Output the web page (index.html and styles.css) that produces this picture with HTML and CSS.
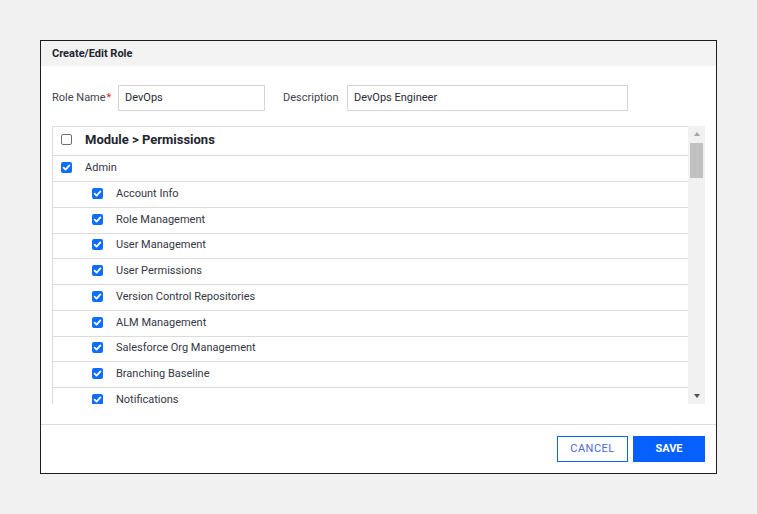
FILE: index.html
```html
<!DOCTYPE html>
<html>
<head>
<meta charset="utf-8">
<link rel="stylesheet" href="styles.css">
</head>
<body>
<div class="modal">
  <div class="modal-header">Create/Edit Role</div>
  <div class="modal-body">
    <div class="form-row">
      <label class="field-label name-label">Role Name<span class="req">*</span></label>
      <div class="input input-name">DevOps</div>
      <label class="field-label desc-label">Description</label>
      <div class="input input-desc">DevOps Engineer</div>
    </div>
    <div class="table-wrap">
      <div class="table">
        <div class="row head-row">
          <span class="cb cb-empty"></span>
          <span class="head-text">Module &gt; Permissions</span>
        </div>
        <div class="row module-row">
          <span class="cb"><svg viewBox="0 0 11 11"><path d="M2.6 5.6 L4.6 7.6 L8.4 3.4" fill="none" stroke="#fff" stroke-width="1.8" stroke-linecap="round" stroke-linejoin="round"/></svg></span>
          <span class="row-text">Admin</span>
        </div>
        <div class="row perm-row"><span class="cb"><svg viewBox="0 0 11 11"><path d="M2.6 5.6 L4.6 7.6 L8.4 3.4" fill="none" stroke="#fff" stroke-width="1.8" stroke-linecap="round" stroke-linejoin="round"/></svg></span><span class="row-text">Account Info</span></div>
        <div class="row perm-row"><span class="cb"><svg viewBox="0 0 11 11"><path d="M2.6 5.6 L4.6 7.6 L8.4 3.4" fill="none" stroke="#fff" stroke-width="1.8" stroke-linecap="round" stroke-linejoin="round"/></svg></span><span class="row-text">Role Management</span></div>
        <div class="row perm-row"><span class="cb"><svg viewBox="0 0 11 11"><path d="M2.6 5.6 L4.6 7.6 L8.4 3.4" fill="none" stroke="#fff" stroke-width="1.8" stroke-linecap="round" stroke-linejoin="round"/></svg></span><span class="row-text">User Management</span></div>
        <div class="row perm-row"><span class="cb"><svg viewBox="0 0 11 11"><path d="M2.6 5.6 L4.6 7.6 L8.4 3.4" fill="none" stroke="#fff" stroke-width="1.8" stroke-linecap="round" stroke-linejoin="round"/></svg></span><span class="row-text">User Permissions</span></div>
        <div class="row perm-row"><span class="cb"><svg viewBox="0 0 11 11"><path d="M2.6 5.6 L4.6 7.6 L8.4 3.4" fill="none" stroke="#fff" stroke-width="1.8" stroke-linecap="round" stroke-linejoin="round"/></svg></span><span class="row-text">Version Control Repositories</span></div>
        <div class="row perm-row"><span class="cb"><svg viewBox="0 0 11 11"><path d="M2.6 5.6 L4.6 7.6 L8.4 3.4" fill="none" stroke="#fff" stroke-width="1.8" stroke-linecap="round" stroke-linejoin="round"/></svg></span><span class="row-text">ALM Management</span></div>
        <div class="row perm-row"><span class="cb"><svg viewBox="0 0 11 11"><path d="M2.6 5.6 L4.6 7.6 L8.4 3.4" fill="none" stroke="#fff" stroke-width="1.8" stroke-linecap="round" stroke-linejoin="round"/></svg></span><span class="row-text">Salesforce Org Management</span></div>
        <div class="row perm-row"><span class="cb"><svg viewBox="0 0 11 11"><path d="M2.6 5.6 L4.6 7.6 L8.4 3.4" fill="none" stroke="#fff" stroke-width="1.8" stroke-linecap="round" stroke-linejoin="round"/></svg></span><span class="row-text">Branching Baseline</span></div>
        <div class="row perm-row"><span class="cb"><svg viewBox="0 0 11 11"><path d="M2.6 5.6 L4.6 7.6 L8.4 3.4" fill="none" stroke="#fff" stroke-width="1.8" stroke-linecap="round" stroke-linejoin="round"/></svg></span><span class="row-text">Notifications</span></div>
      </div>
      <div class="scrollbar">
        <span class="arrow arrow-up"></span>
        <span class="thumb"></span>
        <span class="track"></span>
        <span class="arrow arrow-down"></span>
      </div>
    </div>
  </div>
  <div class="modal-footer">
    <button class="btn btn-cancel">CANCEL</button>
    <button class="btn btn-save">SAVE</button>
  </div>
</div>
</body>
</html>
```
FILE: styles.css
```css
* { box-sizing: border-box; }
html, body { margin: 0; padding: 0; }
body {
  background: #f1f1f1;
  font-family: Roboto, "Liberation Sans", sans-serif;
  width: 757px;
  height: 514px;
  padding: 40px 0 0 40px;
}
.modal {
  width: 677px;
  height: 434px;
  border: 1px solid #1e1e1e;
  background: #fff;
  display: flex;
  flex-direction: column;
}
.modal-header {
  height: 25px;
  background: #f3f3f3;
  padding: 0 11px;
  font-size: 11px;
  font-weight: 700;
  color: #22252e;
  display: flex;
  align-items: center;
  flex: none;
}
.modal-body {
  padding: 19px 11px 0 11px;
  height: 359px;
  border-bottom: 1px solid #dcdcdc;
  flex: none;
}
.form-row {
  display: flex;
  align-items: center;
  height: 26px;
}
.field-label {
  font-size: 11px;
  color: #43434f;
  flex: none;
  padding-bottom: 2px;
}
.name-label { width: 66px; }
.req { color: #e0262b; margin-left: 1px; }
.desc-label { margin-left: 18px; width: 64px; }
.input {
  height: 26px;
  border: 1px solid #d4d4d4;
  font-size: 11px;
  color: #2a2b38;
  padding: 0 6px 1px;
  display: flex;
  align-items: center;
  flex: none;
}
.input-name { width: 147px; }
.input-desc { width: 281px; }
.table-wrap {
  margin-top: 15px;
  height: 278px;
  width: 653px;
  display: flex;
  overflow: hidden;
}
.table {
  flex: 1;
  border-left: 1px solid #dcdcdc;
  border-top: 1px solid #dcdcdc;
  overflow: hidden;
}
.row {
  display: flex;
  align-items: center;
  border-bottom: 1px solid #dcdcdc;
  height: 25.75px;
  padding-bottom: 2px;
  font-size: 11px;
  color: #353645;
}
.head-row { height: 29px; padding-left: 8px; padding-bottom: 3px; }
.module-row { padding-left: 8px; height: 26px; }
.perm-row { padding-left: 39px; }
.cb {
  width: 11px;
  height: 11px;
  border-radius: 2px;
  background: #0d6efd;
  display: inline-flex;
  flex: none;
}
.cb svg { width: 11px; height: 11px; }
.cb-empty {
  background: #fff;
  border: 1px solid #6f6f6f;
}
.head-text {
  margin-left: 13px;
  font-size: 13px;
  font-weight: 700;
  color: #22252e;
}
.row-text { margin-left: 13px; }
.scrollbar {
  width: 17px;
  background: #f1f1f1;
  display: flex;
  flex-direction: column;
  align-items: center;
}
.arrow {
  width: 0; height: 0;
  border-left: 3.5px solid transparent;
  border-right: 3.5px solid transparent;
  flex: none;
}
.arrow-up {
  border-bottom: 4px solid #a3a3a3;
  margin-top: 6px;
}
.arrow-down {
  border-top: 4px solid #505050;
  margin-bottom: 6px;
}
.thumb {
  width: 13px;
  height: 35px;
  background: #c1c1c1;
  margin-top: 7px;
  flex: none;
}
.track { flex: 1; }
.modal-footer {
  display: flex;
  justify-content: flex-end;
  gap: 5px;
  padding: 11px 11px 0 0;
}
.btn {
  height: 26px;
  font-family: inherit;
  font-size: 11px;
  cursor: pointer;
  padding: 0 0 2px;
}
.btn-cancel {
  width: 71px;
  background: #fff;
  border: 1px solid #0d62fb;
  color: #4a68d8;
  letter-spacing: 0.5px;
}
.btn-save {
  width: 72px;
  background: #0560fd;
  border: none;
  color: #fff;
  font-weight: 700;
}
```
